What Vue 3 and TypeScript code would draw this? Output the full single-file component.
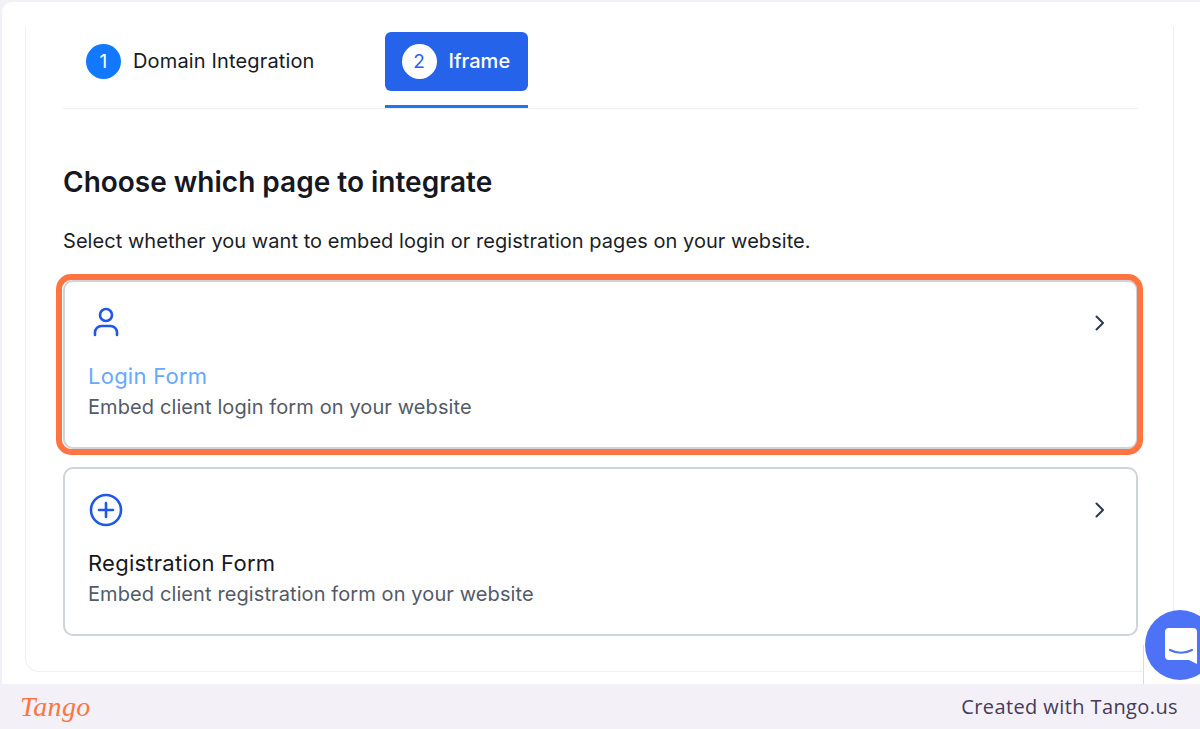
<script setup lang="ts">
interface Option { title: string; desc: string; icon: string; active: boolean }
const options: Option[] = [
  { title: 'Login Form', desc: 'Embed client login form on your website', icon: 'user', active: true },
  { title: 'Registration Form', desc: 'Embed client registration form on your website', icon: 'plus', active: false },
]
</script>

<template>
  <div class="page">
    <main class="frame">
      <section class="panel">
        <nav class="tabs">
          <div class="tab">
            <span class="num">1</span>
            <span class="tab-label">Domain Integration</span>
          </div>
          <div class="tab-wrap">
            <div class="tab selected">
              <span class="num">2</span>
              <span class="tab-label">Iframe</span>
            </div>
          </div>
        </nav>
        <h1>Choose which page to integrate</h1>
        <p class="lead">Select whether you want to embed login or registration pages on your website.</p>
        <div class="options">
          <article v-for="o in options" :key="o.title" class="option" :class="{ active: o.active }">
            <div class="head">
              <svg v-if="o.icon === 'user'" class="icon" viewBox="0 0 36 36" fill="none" stroke="#1f57e7" stroke-width="2.6" stroke-linecap="round">
                <circle cx="18" cy="10" r="6" />
                <path d="M7 30v-2.500A6.500 6.500 0 0 1 13.500 21h9a6.500 6.500 0 0 1 6.500 6.500V30" />
              </svg>
              <svg v-else class="icon" viewBox="0 0 36 36" fill="none" stroke="#1f57e7" stroke-width="2.600" stroke-linecap="round">
                <circle cx="18" cy="18" r="15" />
                <path d="M18 11v14M11 18h14" />
              </svg>
              <svg class="chev" viewBox="0 0 12 18" fill="none" stroke="#2c3a50" stroke-width="2" stroke-linecap="round" stroke-linejoin="round">
                <path d="M2.500 2.500 9 9l-6.500 6.500" />
              </svg>
            </div>
            <h2>{{ o.title }}</h2>
            <p>{{ o.desc }}</p>
          </article>
        </div>
      </section>
    </main>
    <footer class="footer">
      <span class="logo">Tango</span>
      <span class="credit">Created with Tango.us</span>
    </footer>
    <div class="chat-backdrop"></div>
    <div class="chat">
      <svg viewBox="0 0 34 37" width="34" height="37">
        <path d="M5 1h24a4 4 0 0 1 4 4v32l-8-4H5a4 4 0 0 1-4-4V5a4 4 0 0 1 4-4z" fill="#fff" />
        <path d="M6 23c7 3.500 15 3.500 22 0" fill="none" stroke="#4d72f5" stroke-width="2.200" stroke-linecap="round" />
      </svg>
    </div>
  </div>
</template>

<style>
html, body { margin: 0; padding: 0; background: #fff; }
</style>

<style scoped>
.page {
  position: relative;
  width: 1200px;
  height: 729px;
  overflow: hidden;
  display: flex;
  flex-direction: column;
  background: #f3f1f7;
  font-family: Inter, "Liberation Sans", sans-serif;
}
.frame {
  flex: 1;
  min-height: 0;
  margin: 2px 0 0 2px;
  padding: 24px 26px 12px 23px;
  background: #fff;
  border-radius: 10px 0 0 0;
  display: flex;
}
.panel {
  flex: 1;
  border: 1px solid #f0f0f3;
  border-top: 0;
  border-radius: 0 0 14px 14px;
  padding: 6px 35px 0 37px;
}
.tabs {
  display: flex;
  gap: 70px;
  padding-left: 23px;
  height: 76px;
  border-bottom: 1px solid #eff0f3;
  box-sizing: content-box;
}
.tab {
  display: flex;
  align-items: center;
  gap: 12px;
  height: 59px;
  color: #161a22;
  font-size: 20px;
  letter-spacing: 0.15px;
}
.tab-wrap {
  height: 76px;
  box-sizing: border-box;
  border-bottom: 3px solid #1a76f2;
}
.selected {
  background: #2563eb;
  color: #fff;
  border-radius: 6px;
  padding: 0 18px 0 17px;
  font-weight: 500;
  letter-spacing: 0;
}
.tab-label { position: relative; top: -1px; }
.num {
  width: 35px;
  height: 35px;
  border-radius: 50%;
  background: #1278ff;
  color: #fff;
  font-size: 19px;
  font-weight: 400;
  display: flex;
  align-items: center;
  justify-content: center;
}
.selected .num { background: #fff; color: #2563eb; }
h1 {
  margin: 54px 0 0;
  font-size: 28px;
  line-height: 38px;
  font-weight: 600;
  color: #15181f;
}
.lead {
  margin: 26px 0 0;
  font-size: 20px;
  line-height: 28px;
  color: #1b1e26;
  letter-spacing: 0.05px;
}
.options {
  margin-top: 25px;
  display: flex;
  flex-direction: column;
  gap: 18px;
}
.option {
  position: relative;
  height: 169px;
  box-sizing: border-box;
  border: 2px solid #cfd3da;
  border-radius: 10px;
  padding: 22px 24px 0 23px;
  background: #fff;
}
.option.active::after {
  content: "";
  position: absolute;
  inset: -8px -7px -8px -9px;
  border: 6px solid #ff7440;
  border-radius: 15px;
  pointer-events: none;
}
.head {
  display: flex;
  justify-content: space-between;
  align-items: flex-start;
  height: 38px;
}
.icon { width: 36px; height: 36px; margin-top: 1px; }
.chev { width: 12px; height: 18px; margin: 10px 6px 0 0; }
h2 {
  margin: 19px 0 0;
  font-size: 22px;
  line-height: 30px;
  font-weight: 400;
  color: #15181f;
  letter-spacing: 0.25px;
}
.active h2 { color: #66a9ff; }
.option p {
  margin: 2px 0 0;
  font-size: 20px;
  line-height: 28px;
  color: #535a68;
  letter-spacing: 0.1px;
}
.footer {
  height: 45px;
  flex: none;
  display: flex;
  align-items: center;
  justify-content: space-between;
  padding: 0 22px 0 20px;
  border-radius: 0 0 10px 10px;
  background: #f3f1f7;
}
.logo {
  font-family: "Liberation Serif", serif;
  font-style: italic;
  font-size: 28px;
  color: #ff7440;
  letter-spacing: 0.3px;
}
.credit {
  font-family: "Open Sans", sans-serif;
  font-size: 20px;
  letter-spacing: 0.4px;
  color: #463a56;
}
.chat-backdrop {
  position: absolute;
  left: 1143px;
  top: 645px;
  width: 40px;
  height: 39px;
  background: #fff;
  border-left: 1px solid #dcdce0;
}
.chat {
  position: absolute;
  left: 1145px;
  top: 610px;
  width: 70px;
  height: 70px;
  border-radius: 50%;
  background: #4d72f5;
  display: flex;
  align-items: center;
  padding-left: 19px;
  box-sizing: border-box;
}
</style>
